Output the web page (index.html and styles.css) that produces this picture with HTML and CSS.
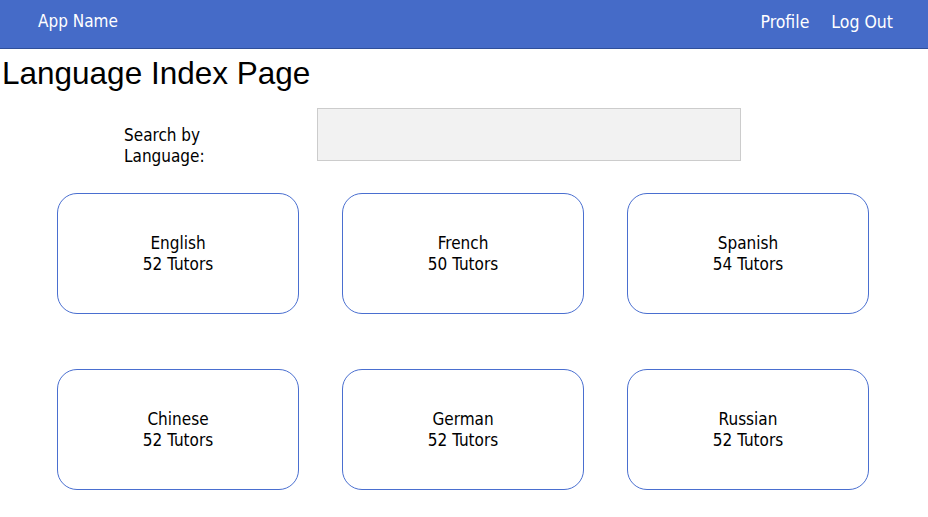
FILE: index.html
```html
<!DOCTYPE html>
<html>
<head>
<meta charset="utf-8">
<link rel="stylesheet" href="styles.css">
</head>
<body>
<header class="topbar">
  <div class="brand">App Name</div>
  <nav class="nav">
    <a class="nav-link">Profile</a>
    <a class="nav-link">Log Out</a>
  </nav>
</header>
<h1 class="title">Language Index Page</h1>
<div class="search-row">
  <label class="search-label">Search by<br>Language:</label>
  <div class="search-box"></div>
</div>
<div class="grid">
  <div class="card"><span>English</span><span>52 Tutors</span></div>
  <div class="card"><span>French</span><span>50 Tutors</span></div>
  <div class="card"><span>Spanish</span><span>54 Tutors</span></div>
  <div class="card"><span>Chinese</span><span>52 Tutors</span></div>
  <div class="card"><span>German</span><span>52 Tutors</span></div>
  <div class="card"><span>Russian</span><span>52 Tutors</span></div>
</div>
</body>
</html>
```
FILE: styles.css
```css
html, body {
  margin: 0;
  padding: 0;
  background: #fff;
}
body {
  font-family: "DejaVu Sans Condensed", "DejaVu Sans", sans-serif;
  color: #000;
}
.topbar {
  height: 48px;
  background: #456bc8;
  border-bottom: 1px solid #2f4f9a;
  display: flex;
  align-items: center;
  justify-content: space-between;
  padding: 0 35px 0 38px;
  color: #fff;
  font-size: 17px;
}
.brand {
  margin-top: -6px;
}
.nav {
  display: flex;
  gap: 22px;
  margin-top: -4px;
  font-size: 17.5px;
}
.nav-link {
  color: #fff;
}
.title {
  font-family: "Liberation Sans", Arial, sans-serif;
  font-weight: normal;
  font-size: 31.5px;
  margin: 6px 0 0 2px;
  line-height: 36px;
}
.search-row {
  display: flex;
  align-items: flex-start;
  margin-top: 17px;
  padding-left: 124px;
}
.search-label {
  width: 193px;
  font-size: 17px;
  line-height: 21px;
  margin-top: 17px;
}
.search-box {
  width: 422px;
  height: 51px;
  background: #f2f2f2;
  border: 1px solid #cccccc;
}
.grid {
  display: grid;
  grid-template-columns: repeat(3, 242px);
  column-gap: 43px;
  row-gap: 55px;
  padding-left: 57px;
  margin-top: 26px;
}
.card {
  height: 119px;
  border: 1px solid #4a6fd0;
  border-radius: 20px;
  display: flex;
  flex-direction: column;
  align-items: center;
  justify-content: center;
  font-size: 17px;
  line-height: 21px;
}
```
